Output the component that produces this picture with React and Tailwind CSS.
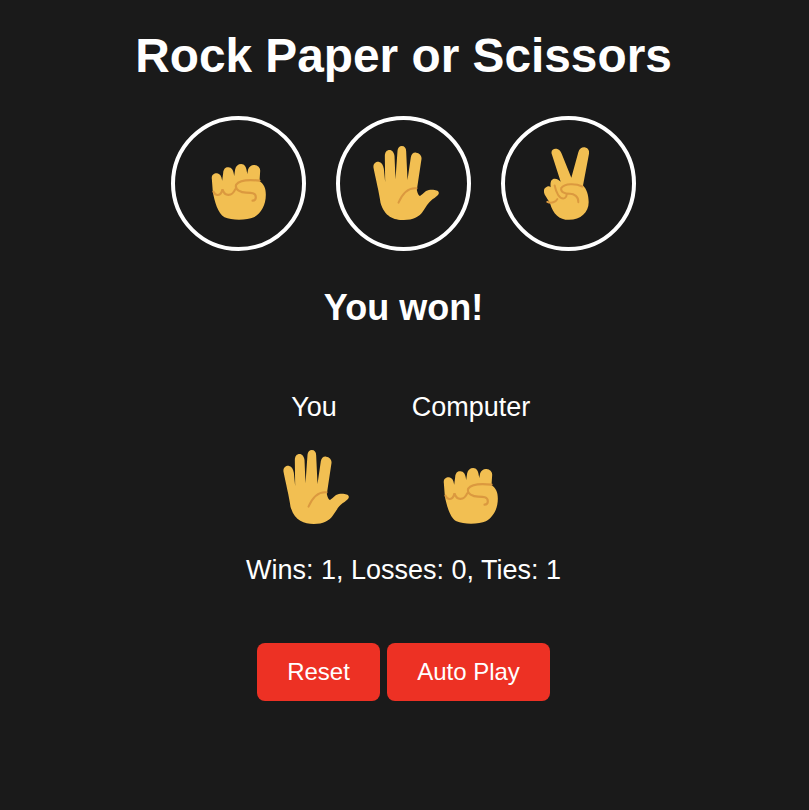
import React from 'react';

const SKIN = '#f2bf52';
const CREASE = '#db993f';

const Rock = () => (
  <svg width="55" height="56" viewBox="0 0 164 168" className="block">
    <path
      fill={SKIN}
      d="M2 45C0 33 9 27 18 28C26 29 31 36 33 50L36 27C37 14 44 9 52 10C61 11 67 17 69 36L72 16C74 6 81 0 90 0C100 0 106 8 108 30L111 16C114 7 122 2 130 3C141 4 148 12 147 22L145 52C158 60 164 72 164 92C164 122 150 148 128 160C108 169 62 170 40 160C20 150 10 110 5 85Z"
    />
    <path
      fill="none"
      stroke={CREASE}
      strokeWidth="6.5"
      strokeLinecap="round"
      d="M7 83C12 96 29 99 34 76C40 97 62 99 72 76M145 50C120 47 86 47 75 62C70 78 90 86 105 86C120 86 134 86 134 100C134 106 130 110 124 110"
    />
  </svg>
);

const Paper = () => (
  <svg width="66" height="74" viewBox="0 0 197 222" className="block">
    <path
      fill={SKIN}
      d="M1 65C-1 52 10 46 18 48C26 50 30 58 32 68L36 108L35 30C35 18 41 12 49 12C57 12 63 20 64 30L67 100L73 14C74 5 79 0 86 0C94 0 99 6 99 16L103 102L113 34C115 24 120 19 129 20C139 21 146 29 145 39L131 132C133 142 136 148 140 150C147 148 155 134 167 132C180 130 196 132 197 140C197 148 188 152 178 160C165 170 158 184 148 198C138 212 120 222 92 222C62 222 34 212 22 170C18 140 8 100 1 65Z"
    />
    <path
      fill="none"
      stroke={CREASE}
      strokeWidth="6"
      strokeLinecap="round"
      d="M130 127C110 125 90 138 76 170"
    />
  </svg>
);

const Scissors = () => (
  <svg width="45" height="73" viewBox="0 0 135 218" className="block">
    <path
      fill={SKIN}
      d="M23 20C20 8 30 3 38 5C46 7 50 12 53 20L82 92L103 15C106 4 115 -1 124 1C133 3 137 12 135 20L117 115C128 125 134 145 134 165C134 195 110 218 75 218C45 218 27 200 18 168L2 142C-3 130 0 122 10 118C15 116 18 118 20 120C18 105 22 95 32 95C40 95 46 100 50 104Z"
    />
    <path
      fill="none"
      stroke={CREASE}
      strokeWidth="6"
      strokeLinecap="round"
      d="M10 164C22 170 36 164 40 156M32 115C36 135 46 158 62 153C68 150 68 145 68 142M115 118C95 108 62 108 52 122C48 135 62 140 78 140C90 140 104 148 103 165"
    />
  </svg>
);

const MoveButton = ({ children }) => (
  <button className="w-[135px] h-[135px] rounded-full border-4 border-white bg-transparent flex items-end justify-center pb-[27px]">
    {children}
  </button>
);

const App = () => {
  return (
    <div className="min-h-screen bg-[#1a1a1a] text-white flex flex-col items-center pr-[2px] font-['Liberation_Sans',Arial,sans-serif]">
      <h1 className="mt-[28px] text-[47.8px] leading-[55px] font-bold">Rock Paper or Scissors</h1>

      <div className="mt-[33px] flex gap-[30px]">
        <MoveButton><Rock /></MoveButton>
        <MoveButton><div className="ml-[5px]"><Paper /></div></MoveButton>
        <MoveButton><div className="mr-[5px]"><Scissors /></div></MoveButton>
      </div>

      <p className="mt-[37px] text-[36px] leading-[40px] font-bold">You won!</p>

      <div className="mt-[64px] ml-[2px] flex gap-[63px]">
        <div className="w-[70px] flex flex-col items-center">
          <span className="text-[27px] leading-[30px]">You</span>
          <div className="mt-[28px] self-end"><Paper /></div>
        </div>
        <div className="w-[118px] flex flex-col items-center">
          <span className="text-[27px] leading-[30px]">Computer</span>
          <div className="mt-[46px] mr-[1px]"><Rock /></div>
        </div>
      </div>

      <p className="mt-[31px] text-[27px] leading-[30px]">Wins: 1, Losses: 0, Ties: 1</p>

      <div className="mt-[58px] flex gap-[7px]">
        <button className="w-[123px] h-[58px] rounded-lg bg-[#ed3124] text-[24px] text-white">Reset</button>
        <button className="w-[163px] h-[58px] rounded-lg bg-[#ed3124] text-[24px] text-white">Auto Play</button>
      </div>
    </div>
  );
};

export default App;
